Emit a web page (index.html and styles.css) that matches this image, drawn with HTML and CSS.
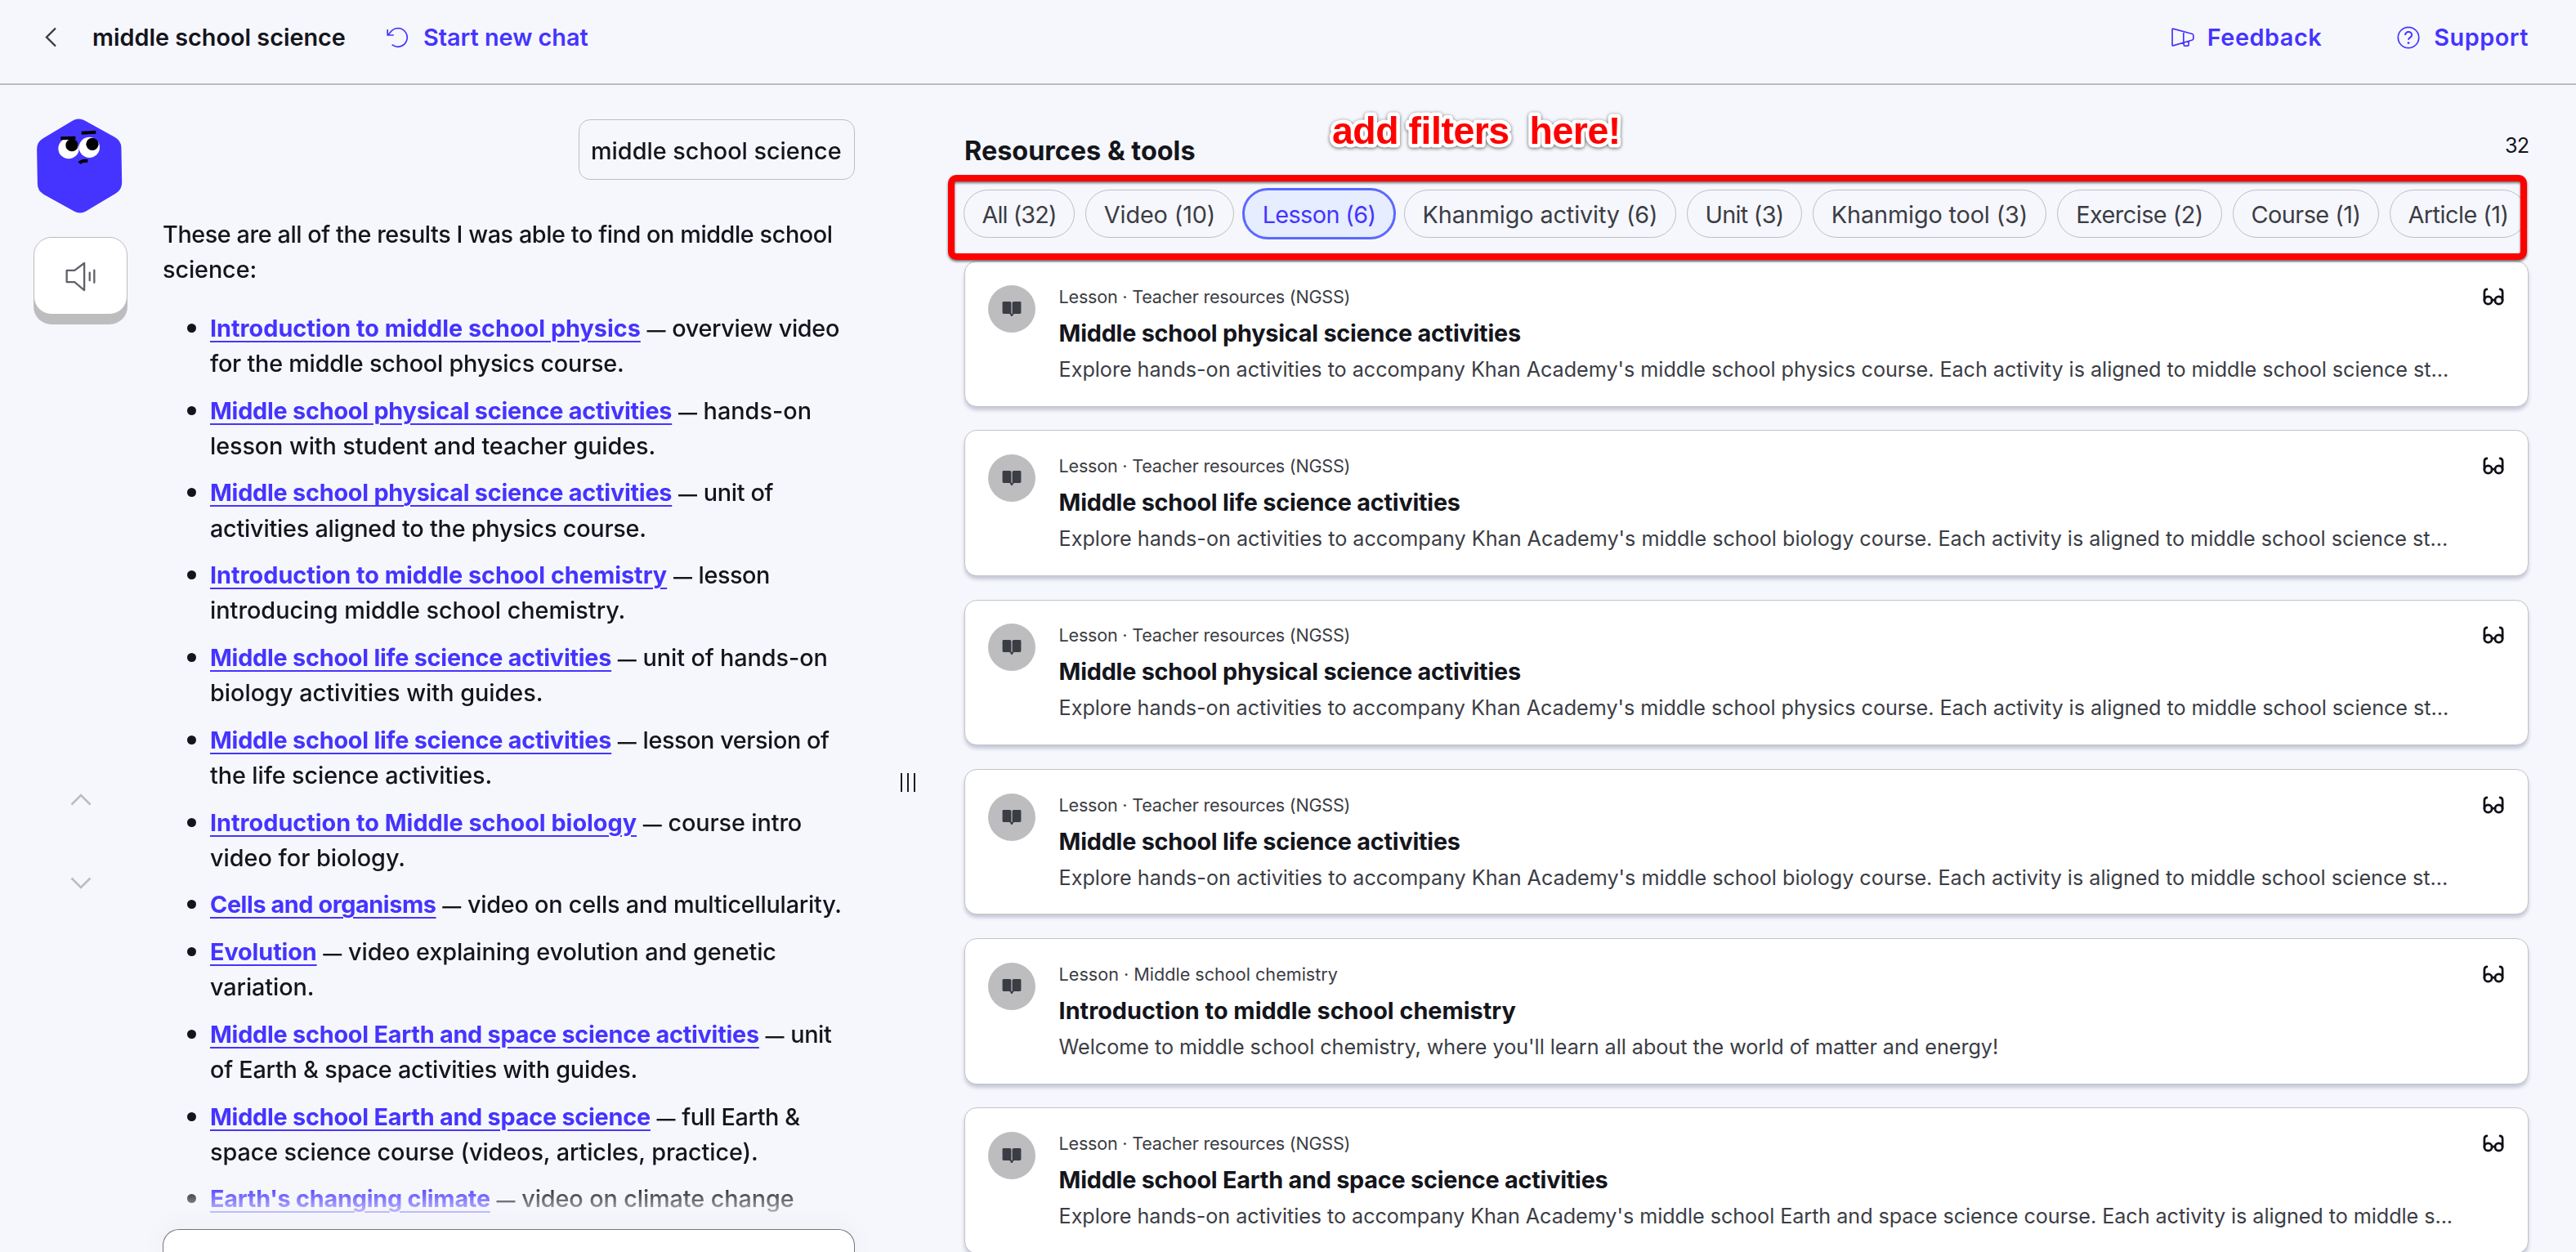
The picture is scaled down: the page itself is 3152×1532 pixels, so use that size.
FILE: index.html
```html
<!DOCTYPE html>
<html lang="en">
<head>
<meta charset="utf-8">
<title>middle school science</title>
<link rel="stylesheet" href="styles.css">
</head>
<body>
<svg class="sprite" aria-hidden="true">
  <symbol id="book" viewBox="0 0 24 20"><path d="M2 1h7.600c1 0 1.800.8 1.800 1.800v12.400c0 .6.400 1 .6 1s.6-.4.600-1V2.800c0-1 .8-1.800 1.800-1.800H22c.8 0 1.400.6 1.400 1.400v12.200c0 .8-.6 1.400-1.400 1.400h-6.500c-1 0-1.700.6-2.100 1.800h-.2c0 .8-.5 1.200-1.200 1.200s-1.200-.4-1.200-1.200h-.2C10.200 16.600 9.500 16 8.500 16H2C1.200 16 .6 15.400.6 14.600V2.400C.6 1.600 1.200 1 2 1z" fill="#3b3d45"/></symbol>
  <symbol id="glasses" viewBox="0 0 26 22"><g fill="none" stroke="#0f1017" stroke-width="2.700" stroke-linecap="round"><circle cx="6.500" cy="15.500" r="4.600"/><circle cx="19.500" cy="15.500" r="4.600"/><path d="M11 15.200h4M1.900 15.500V5.500c0-2 .8-3.500 3-3.700M24.100 15.500V5.500c0-2-.8-3.500-3-3.700"/></g></symbol>
</svg>

<header class="topbar">
  <div class="topbar-group">
    <svg class="back" width="15" height="25" viewBox="0 0 15 25"><path d="M13 1.500 2 12.500l11 11" fill="none" stroke="#3b3d45" stroke-width="2.400"/></svg>
    <h1 class="topbar-title">middle school science</h1>
    <a class="action"><svg width="28" height="26" viewBox="0 0 28 26"><path d="M1.200 3v7h7.600M2 9.400 4.200 7C6.500 3.500 10.200 1.500 14.800 1.500a11.400 11.400 0 1 1-8.200 20.200" fill="none" stroke="#4534ff" stroke-width="1.700"/></svg><span class="start">Start new chat</span></a>
  </div>
  <div class="topbar-group">
    <a class="action feedback"><svg width="28" height="24" viewBox="0 0 28 24"><path d="M1 1.800v19.400c0 .6.400.9 1 .700L25.500 15c.8-.3 1.300-.9 1.300-1.700V9.200c0-.8-.5-1.500-1.300-1.700L2 1.100c-.6-.2-1 .1-1 .700zM14.800 4.700v13.800M15.200 18.400v2.500c0 .8.5 1.300 1.300 1.300h3.300c.8 0 1.300-.5 1.300-1.300v-4.200" fill="none" stroke="#4534ff" stroke-width="1.700"/></svg><span>Feedback</span></a>
    <a class="action support"><svg width="28" height="28" viewBox="0 0 28 28"><circle cx="14" cy="14" r="12.700" fill="none" stroke="#4534ff" stroke-width="1.700"/><path d="M10 11c0-2.300 1.700-3.900 4-3.900s4.100 1.500 4.100 3.700c0 3.200-4.100 3-4.100 6" fill="none" stroke="#4534ff" stroke-width="2"/><circle cx="14" cy="20.600" r="1.400" fill="#4534ff"/></svg><span>Support</span></a>
  </div>
</header>

<main class="layout">
  <aside class="rail">
    <svg width="115" height="120" viewBox="123 70 345 360">
      <path transform="rotate(-1 291.500 250)" d="M291.500 123l110 63.500v127l-110 63.500-110-63.500v-127z" fill="#4534ff" stroke="#4534ff" stroke-width="90" stroke-linejoin="round"/>
      <circle cx="252" cy="186" r="38" fill="#fff"/><circle cx="328" cy="182" r="38" fill="#fff"/>
      <circle cx="264" cy="174" r="23"/><circle cx="339" cy="170" r="23"/>
      <path d="M223 149l54-2M299 129l53-3M291 240q10-11 31-8" fill="none" stroke="#000" stroke-width="12"/>
    </svg>
    <button class="speak"><svg width="39" height="37" viewBox="240 600 116 112"><path d="M247 633h29l36-27v100l-36-30h-29zM332 641v29M349 632v46" fill="none" stroke="#5f6068" stroke-width="7" stroke-linejoin="round" stroke-linecap="round"/></svg></button>
    <nav class="steps">
      <svg width="26" height="15" viewBox="0 0 26 15"><path d="M1.500 13.500 13 2l11.500 11.500" fill="none" stroke="#bbbcc0" stroke-width="2.600"/></svg>
      <svg width="26" height="15" viewBox="0 0 26 15"><path d="M1.500 1.500 13 13 24.500 1.500" fill="none" stroke="#bbbcc0" stroke-width="2.600"/></svg>
    </nav>
  </aside>

  <section class="chat">
    <div class="messages">
      <div class="bubble">middle school science</div>
      <p class="intro"><span class="t4">These are all of the results I was able to find on middle school</span><br><span class="t1">science:</span></p>
      <ul class="results">
        <li><a>Introduction to middle school physics</a> <i>—</i> <span class="t3">overview video</span><br><span class="t2">for the middle school physics course.</span></li>
        <li><a class="t2">Middle school physical science activities</a> <i>—</i> hands-on<br><span class="t1">lesson with student and teacher guides.</span></li>
        <li><a class="t2">Middle school physical science activities</a> <i>—</i> <span class="t3">unit of</span><br><span class="t2">activities aligned to the physics course.</span></li>
        <li><a>Introduction to middle school chemistry</a> <i>—</i> <span class="t4">lesson</span><br><span>introducing middle school chemistry.</span></li>
        <li><a class="t2">Middle school life science activities</a> <i>—</i> <span class="t1">unit of hands-on</span><br><span>biology activities with guides.</span></li>
        <li><a class="t2">Middle school life science activities</a> <i>—</i> <span class="t4">lesson version of</span><br><span class="t1">the life science activities.</span></li>
        <li><a>Introduction to Middle school biology</a> <i>—</i> <span class="t1">course intro</span><br><span>video for biology.</span></li>
        <li><a class="t4">Cells and organisms</a> <i>—</i> <span class="t2">video on cells and multicellularity.</span></li>
        <li><a class="t1">Evolution</a> <i>—</i> <span class="t1">video explaining evolution and genetic</span><br><span class="t1">variation.</span></li>
        <li><a class="t2">Middle school Earth and space science activities</a> <i>—</i> <span class="t4">unit</span><br><span class="t2">of Earth &amp; space activities with guides.</span></li>
        <li><a class="t2">Middle school Earth and space science</a> <i>—</i> <span class="t4">full Earth &amp;</span><br><span class="t1">space science course (videos, articles, practice).</span></li>
        <li><a class="t2">Earth's changing climate</a> <i>—</i> <span class="t1">video on climate change</span></li>
      </ul>
    </div>
    <div class="composer"></div>
  </section>

  <div class="splitter"><b></b><b></b><b></b></div>

  <section class="resources">
    <div class="resources-head">
      <h2>Resources &amp; tools</h2>
      <span class="count">32</span>
    </div>
    <div class="filters">
      <div class="chip all">All (32)</div>
      <div class="chip video">Video (10)</div>
      <div class="chip lesson">Lesson (6)</div>
      <div class="chip activity">Khanmigo activity (6)</div>
      <div class="chip unit">Unit (3)</div>
      <div class="chip tool">Khanmigo tool (3)</div>
      <div class="chip exercise">Exercise (2)</div>
      <div class="chip course">Course (1)</div>
      <div class="chip article">Article (1)</div>
    </div>
    <div class="cards">
      <article class="card">
        <div class="badge"><svg width="24" height="20"><use href="#book"/></svg></div>
        <div class="info"><div class="kicker t2">Lesson · Teacher resources (NGSS)</div><h3 class="t2">Middle school physical science activities</h3><p>Explore hands-on activities to accompany Khan Academy's middle school physics course. Each activity is aligned to middle school science st...</p></div>
        <svg class="glasses" width="26" height="22"><use href="#glasses"/></svg>
      </article>
      <article class="card">
        <div class="badge"><svg width="24" height="20"><use href="#book"/></svg></div>
        <div class="info"><div class="kicker t2">Lesson · Teacher resources (NGSS)</div><h3 class="t2">Middle school life science activities</h3><p class="wide">Explore hands-on activities to accompany Khan Academy's middle school biology course. Each activity is aligned to middle school science st...</p></div>
        <svg class="glasses" width="26" height="22"><use href="#glasses"/></svg>
      </article>
      <article class="card">
        <div class="badge"><svg width="24" height="20"><use href="#book"/></svg></div>
        <div class="info"><div class="kicker t2">Lesson · Teacher resources (NGSS)</div><h3 class="t2">Middle school physical science activities</h3><p>Explore hands-on activities to accompany Khan Academy's middle school physics course. Each activity is aligned to middle school science st...</p></div>
        <svg class="glasses" width="26" height="22"><use href="#glasses"/></svg>
      </article>
      <article class="card">
        <div class="badge"><svg width="24" height="20"><use href="#book"/></svg></div>
        <div class="info"><div class="kicker t2">Lesson · Teacher resources (NGSS)</div><h3 class="t2">Middle school life science activities</h3><p class="wide">Explore hands-on activities to accompany Khan Academy's middle school biology course. Each activity is aligned to middle school science st...</p></div>
        <svg class="glasses" width="26" height="22"><use href="#glasses"/></svg>
      </article>
      <article class="card">
        <div class="badge"><svg width="24" height="20"><use href="#book"/></svg></div>
        <div class="info"><div class="kicker">Lesson · Middle school chemistry</div><h3>Introduction to middle school chemistry</h3><p>Welcome to middle school chemistry, where you'll learn all about the world of matter and energy!</p></div>
        <svg class="glasses" width="26" height="22"><use href="#glasses"/></svg>
      </article>
      <article class="card">
        <div class="badge"><svg width="24" height="20"><use href="#book"/></svg></div>
        <div class="info"><div class="kicker t2">Lesson · Teacher resources (NGSS)</div><h3 class="t2">Middle school Earth and space science activities</h3><p class="narrow">Explore hands-on activities to accompany Khan Academy's middle school Earth and space science course. Each activity is aligned to middle s...</p></div>
        <svg class="glasses" width="26" height="22"><use href="#glasses"/></svg>
      </article>
    </div>
  </section>
</main>

<div class="note-frame"></div>
<svg class="note" width="400" height="70" viewBox="0 0 400 70"><text x="20" y="46" xml:space="preserve">add filters  here!</text></svg>
</body>
</html>
```
FILE: styles.css
```css
* { box-sizing: border-box; }
body {
  margin: 0;
  height: 1532px;
  overflow: hidden;
  position: relative;
  display: flex;
  flex-direction: column;
  background: #f6f7fc;
  color: #14151c;
  font-family: Inter, "Liberation Sans", sans-serif;
  font-size: 28.8px;
}
svg { display: block; flex: none; }
.sprite { position: absolute; width: 0; height: 0; }
h1, h2, h3, p, ul { margin: 0; padding: 0; }
.t1 { letter-spacing: -0.1px; }
.t2 { letter-spacing: -0.23px; }
.t3 { letter-spacing: -0.3px; }
.t4 { letter-spacing: -0.42px; }

.topbar {
  flex: none;
  height: 104px;
  padding: 0 58px 11px 55px;
  border-bottom: 2px solid #bbbcc1;
  display: flex;
  justify-content: space-between;
  align-items: center;
}
.topbar-group { display: flex; align-items: center; white-space: nowrap; }
.back { margin-right: 43px; }
.topbar-title { font-size: 28.8px; font-weight: 600; width: 360px; }
.action { display: flex; align-items: center; gap: 16px; color: #4534ff; font-weight: 600; }
.action.feedback, .action.support { letter-spacing: 0.55px; }
.action.support { gap: 17px; }
.action.feedback { margin-right: 92px; }
.start { margin-left: 1px; }

.layout { flex: 1; min-height: 0; display: flex; }
.rail {
  width: 199px;
  padding: 39px 0 0 41px;
  display: flex;
  flex-direction: column;
}
.speak {
  width: 115px;
  height: 95px;
  margin-top: 27px;
  padding: 2px 0 0;
  border: 1.5px solid #bdbdc0;
  border-radius: 22px;
  background: #fff;
  box-shadow: 0 12px 0 #bdbdc0;
  display: flex;
  align-items: center;
  justify-content: center;
}
.steps {
  width: 116px;
  margin-top: 586px;
  display: flex;
  flex-direction: column;
  align-items: center;
  gap: 87px;
}
.chat { width: 847px; display: flex; flex-direction: column; }
.messages {
  flex: 1;
  min-height: 0;
  overflow: hidden;
  padding-top: 42px;
  display: flex;
  flex-direction: column;
  white-space: nowrap;
  -webkit-mask-image: linear-gradient(#000 calc(100% - 54px), transparent calc(100% - 6px));
  mask-image: linear-gradient(#000 calc(100% - 54px), transparent calc(100% - 6px));
}
.bubble {
  align-self: flex-end;
  height: 74px;
  width: 338px;
  line-height: 74px;
  border: 1.5px solid #bdbec2;
  border-radius: 14px;
  padding: 1px 14px;
  font-weight: 500;
}
.intro { margin-top: 44.5px; line-height: 43.2px; font-weight: 500; }
.results {
  margin-top: 28px;
  padding-left: 58px;
  display: flex;
  flex-direction: column;
  gap: 13.6px;
  line-height: 43.1px;
  font-weight: 500;
  list-style: disc;
}
.results li::marker { font-size: 33px; }
.results i { font-style: normal; font-size: 23px; line-height: 1; font-weight: 600; }
.results a {
  color: #4534ff;
  font-weight: 700;
  text-decoration: underline;
  text-decoration-thickness: 2.4px;
  text-underline-offset: 4.5px;
}
.composer {
  height: 28px;
  border: 1.5px solid #75767c;
  border-bottom: 0;
  border-radius: 20px 20px 0 0;
  background: #fff;
  box-shadow: 0 0 36px rgba(60, 60, 60, 0.05);
}

.splitter {
  width: 133px;
  padding: 842px 0 0 56px;
  display: flex;
  gap: 6px;
}
.splitter b { width: 2px; height: 23px; background: #1c1d24; }

.resources { width: 1916px; }
.resources-head {
  height: 128px;
  padding: 57px 0 0 1px;
  display: flex;
  justify-content: space-between;
}
.resources-head h2 { font-size: 32.4px; line-height: 48px; font-weight: 700; letter-spacing: 0; }
.count { font-size: 25.2px; line-height: 35px; letter-spacing: -1px; padding-right: 1px; }
.filters { display: flex; align-items: center; height: 59px; gap: 13px; }
.chip {
  flex: none;
  height: 59px;
  padding-top: 1px;
  border: 1.4px solid #bdbec2;
  border-radius: 30px;
  display: flex;
  align-items: center;
  justify-content: center;
  color: #3b3d45;
  letter-spacing: -0.5px;
  white-space: nowrap;
}
.all { width: 136px; letter-spacing: -0.9px; }
.video { width: 182px; letter-spacing: -0.1px; }
.lesson {
  width: 188px;
  height: 63px;
  margin: 0 -3px;
  border: 3px solid #5b68ff;
  border-radius: 32px;
  background: #e5edff;
  color: #4534ff;
  letter-spacing: -0.6px;
}
.activity { width: 333px; letter-spacing: -0.1px; }
.unit { width: 141px; letter-spacing: -0.7px; }
.tool { width: 286px; letter-spacing: -0.12px; }
.exercise { width: 202px; }
.course { width: 179px; }
.article { width: 168px; }

.cards { margin: 28px 0 0 1px; display: flex; flex-direction: column; gap: 28.8px; }
.card {
  flex: none;
  height: 178.5px;
  width: 1914px;
  padding: 28.8px 28.8px 0 28px;
  display: flex;
  gap: 28.6px;
  background: #fff;
  border: 1.4px solid #c3c4c9;
  border-radius: 15px;
  box-shadow: 0 4px 4px rgba(33, 36, 90, 0.22);
}
.badge {
  flex: none;
  width: 58px;
  height: 58px;
  border-radius: 50%;
  background: #bdbdc0;
  display: flex;
  align-items: center;
  justify-content: center;
}
.info { flex: 1; min-width: 0; white-space: nowrap; }
.kicker { font-size: 21.6px; line-height: 28px; color: #3b3d45; }
.info h3 { margin-top: 13px; font-size: 28.8px; line-height: 36px; font-weight: 700; }
.info p { margin-top: 8px; font-size: 25.2px; line-height: 36px; color: #3b3d45; letter-spacing: -0.04px; }
.info .wide { letter-spacing: -0.02px; }
.info .narrow { letter-spacing: -0.06px; }
.glasses { margin-top: 3px; }

.note-frame {
  position: absolute;
  left: 1160px;
  top: 214px;
  width: 1932px;
  height: 104px;
  border: 8px solid #f00;
  border-radius: 10px;
  filter: drop-shadow(0 2px 1.5px rgba(0, 0, 0, 0.55));
}
.note {
  position: absolute;
  left: 1610px;
  top: 130px;
  filter: drop-shadow(0 1px 2px rgba(0, 0, 0, 0.6));
}
.note text {
  font: bold 46.5px "Liberation Sans", sans-serif;
  letter-spacing: -0.5px;
  white-space: pre;
  fill: #f00;
  stroke: #fff;
  stroke-width: 9px;
  stroke-linejoin: round;
  paint-order: stroke fill;
}
```
